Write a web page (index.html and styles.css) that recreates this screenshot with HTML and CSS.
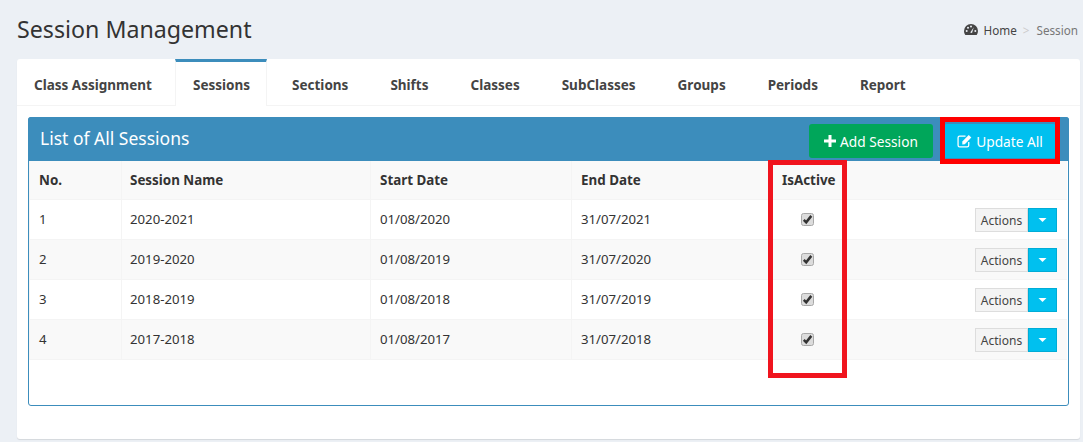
FILE: index.html
```html
<!DOCTYPE html>
<html lang="en">
<head>
  <meta charset="UTF-8" />
  <title>Session Management</title>
  <link rel="stylesheet" href="styles.css">
</head>
<body>
  <svg class="sprite" aria-hidden="true">
    <symbol id="ic-check" viewBox="0 0 13 13">
      <rect x="0.5" y="0.5" width="12" height="12" rx="2" fill="#dcdcdc" stroke="#a8a8a8"/>
      <path d="M2.800 6.800 L5.200 9.300 L10.300 2.900" fill="none" stroke="#333" stroke-width="2.500"/>
    </symbol>
    <symbol id="ic-caret" viewBox="0 0 8 4">
      <path d="M0 0 H8 L4 4 Z" fill="#fff"/>
    </symbol>
  </svg>

  <header class="page-head">
    <h1>Session Management</h1>
    <div class="crumbs">
      <svg class="gauge" viewBox="0 0 14 11"><path d="M7 0a7 7 0 0 0-7 7c0 1.500.5 2.900 1.300 4h11.400A7 7 0 0 0 14 7a7 7 0 0 0-7-7z" fill="#444"/><circle cx="2.700" cy="7" r="1" fill="#ecf0f5"/><circle cx="4" cy="3.800" r="1" fill="#ecf0f5"/><circle cx="7" cy="2.500" r="1" fill="#ecf0f5"/><circle cx="11.300" cy="7" r="1" fill="#ecf0f5"/><path d="M6.200 8.500L9.800 3.300L8 9z" fill="#ecf0f5"/></svg>
      <span class="crumb-home">Home</span>
      <span class="crumb-sep">&gt;</span>
      <span class="crumb-cur">Session</span>
    </div>
  </header>

  <main class="card">
    <nav class="tabs">
      <a class="tab">Class Assignment</a>
      <a class="tab active">Sessions</a>
      <a class="tab">Sections</a>
      <a class="tab">Shifts</a>
      <a class="tab">Classes</a>
      <a class="tab">SubClasses</a>
      <a class="tab">Groups</a>
      <a class="tab">Periods</a>
      <a class="tab">Report</a>
    </nav>

    <section class="box">
      <div class="box-head">
        <h2>List of All Sessions</h2>
        <div class="box-tools">
          <button class="btn btn-green"><svg class="ic-plus" viewBox="0 0 12 12"><path d="M4.500 0h3v4.500H12v3H7.500V12h-3V7.500H0v-3h4.500z" fill="#fff"/></svg>Add Session</button>
          <button class="btn btn-blue"><svg class="ic-edit" viewBox="0 0 15 13"><path d="M11 7.500V10.500a1.500 1.500 0 0 1-1.500 1.500H2.500A1.500 1.500 0 0 1 1 10.500V3.500A1.500 1.500 0 0 1 2.500 2H8" fill="none" stroke="#fff" stroke-width="1.200"/><path d="M5 7l6-6.200 2.400 2.400L7.300 9.500 5 9.800z" fill="#fff"/></svg>Update All</button>
        </div>
      </div>

      <table class="grid">
        <colgroup>
          <col class="c-no"><col class="c-name"><col class="c-date"><col class="c-date"><col class="c-active"><col>
        </colgroup>
        <thead>
          <tr><th>No.</th><th>Session Name</th><th>Start Date</th><th>End Date</th><th>IsActive</th><th></th></tr>
        </thead>
        <tbody>
          <tr>
            <td>1</td><td>2020-2021</td><td>01/08/2020</td><td>31/07/2021</td>
            <td class="chk"><svg class="ic-check"><use href="#ic-check"/></svg></td>
            <td class="act"><span class="split"><span class="split-label">Actions</span><span class="split-caret"><svg><use href="#ic-caret"/></svg></span></span></td>
          </tr>
          <tr>
            <td>2</td><td>2019-2020</td><td>01/08/2019</td><td>31/07/2020</td>
            <td class="chk"><svg class="ic-check"><use href="#ic-check"/></svg></td>
            <td class="act"><span class="split"><span class="split-label">Actions</span><span class="split-caret"><svg><use href="#ic-caret"/></svg></span></span></td>
          </tr>
          <tr>
            <td>3</td><td>2018-2019</td><td>01/08/2018</td><td>31/07/2019</td>
            <td class="chk"><svg class="ic-check"><use href="#ic-check"/></svg></td>
            <td class="act"><span class="split"><span class="split-label">Actions</span><span class="split-caret"><svg><use href="#ic-caret"/></svg></span></span></td>
          </tr>
          <tr>
            <td>4</td><td>2017-2018</td><td>01/08/2017</td><td>31/07/2018</td>
            <td class="chk"><svg class="ic-check"><use href="#ic-check"/></svg></td>
            <td class="act"><span class="split"><span class="split-label">Actions</span><span class="split-caret"><svg><use href="#ic-caret"/></svg></span></span></td>
          </tr>
        </tbody>
      </table>
    </section>
  </main>

  <!-- Red annotation frames drawn over the screenshot -->
  <div class="mark mark-update"></div>
  <div class="mark mark-active"></div>
</body>
</html>
```

FILE: styles.css
```css
:root {
  --blu: #3c8dbc;
  --ciano: #00c0ef;
  --verde: #00a65a;
  --testo: #333;
}

* {
  margin: 0;
  padding: 0;
  box-sizing: border-box;
}

html, body {
  height: 442px;
  overflow: hidden;
}

body {
  background: #ecf0f5;
  color: var(--testo);
  font-family: "Noto Sans", sans-serif;
  font-size: 13px;
  padding: 0 3px 0 17px;
  position: relative;
}

.sprite {
  display: none;
}

.page-head {
  height: 59px;
  padding-bottom: 2px;
  display: flex;
  justify-content: space-between;
  align-items: center;
}

.page-head h1 {
  font-size: 23.2px;
  font-weight: 400;
}

.crumbs {
  display: flex;
  align-items: center;
  font-size: 11.7px;
  color: #444;
  margin-right: 2px;
  margin-top: 2px;
}

.gauge {
  width: 14px;
  height: 11px;
  margin-right: 6px;
}

.crumb-sep {
  color: #ccc;
  margin: 0 7px 0 6px;
}

.crumb-cur {
  color: #777;
}

.card {
  background: #fff;
  height: 380px;
  border-radius: 3px;
  box-shadow: 0 1px 1px rgba(0, 0, 0, 0.1);
  padding: 0 11px;
}

.tabs {
  display: flex;
  height: 47px;
  margin: 0 -11px;
  border-bottom: 1px solid #f4f4f4;
}

.tab {
  padding: 1px 16px 0;
  display: flex;
  align-items: center;
  font-weight: 700;
  font-size: 13.5px;
  color: #444;
  border-top: 3px solid transparent;
  border-left: 1px solid transparent;
  border-right: 1px solid transparent;
  margin-right: 8px;
  height: 47px;
}

.tab:first-child {
  margin-right: 7px;
}

.tab.active {
  border-top-color: var(--blu);
  border-left-color: #f4f4f4;
  border-right-color: #f4f4f4;
  background: #fff;
  margin-left: -1px;
  padding-left: 17px;
}

.box {
  margin-top: 11px;
  height: 289px;
  border: 1px solid var(--blu);
  border-radius: 3px;
}

.box-head {
  background: var(--blu);
  height: 44px;
  margin: -1px -1px 0;
  border-radius: 3px 3px 0 0;
  padding: 7px 13px 0 12px;
  display: flex;
  justify-content: space-between;
  color: #fff;
}

.box-head h2 {
  font-size: 17.5px;
  font-weight: 400;
  line-height: 28px;
}

.box-tools {
  display: flex;
  gap: 11px;
}

.btn {
  height: 34px;
  border: none;
  border-radius: 3px;
  color: #fff;
  font: 400 13.7px "Noto Sans", sans-serif;
  display: flex;
  align-items: center;
  justify-content: center;
}

.btn-green {
  background: var(--verde);
  width: 124px;
}

.btn-blue {
  background: var(--ciano);
  width: 112px;
}

.ic-plus {
  width: 12px;
  height: 12px;
  margin-right: 4px;
}

.ic-edit {
  width: 16px;
  height: 14px;
  margin-right: 3px;
}

.grid {
  width: 1038px;
  border-collapse: collapse;
  table-layout: fixed;
}

.c-no { width: 92px; }
.c-name { width: 249px; }
.c-date { width: 201px; }
.c-active { width: 70px; }

.grid th, .grid td {
  text-align: left;
  padding: 0 9px;
  border: 1px solid #f4f4f4;
  border-top: none;
  font-size: 13.2px;
  height: 40px;
}

.grid th {
  background: #f9f9f9;
  font-size: 13.4px;
  font-weight: 700;
  height: 38px;
}

.grid th:nth-child(2), .grid td:nth-child(2) {
  padding-left: 8px;
}

.grid tbody tr:nth-child(even) {
  background: #f9f9f9;
}

.grid th:nth-child(5),
.grid th:nth-child(6),
.grid td:nth-child(5),
.grid td:nth-child(6) {
  border-left: none;
  border-right: none;
}

.grid td.chk {
  padding-left: 28px;
}

.ic-check {
  display: block;
  width: 13px;
  height: 13px;
}

.grid td.act {
  text-align: right;
  padding-right: 10px;
  padding-top: 2px;
}

.split {
  display: inline-flex;
  vertical-align: middle;
  height: 24px;
}

.split-label {
  width: 53px;
  display: flex;
  align-items: center;
  justify-content: center;
  font-size: 12px;
  color: #444;
  background: #f4f4f4;
  border: 1px solid #ddd;
}

.split-caret {
  width: 29px;
  background: var(--ciano);
  border: 1px solid #00acd6;
  display: flex;
  align-items: center;
  justify-content: center;
}

.split-caret svg {
  width: 9px;
  height: 4px;
}

.mark {
  position: absolute;
  border: 5px solid #f0141e;
  pointer-events: none;
}

.mark-update {
  left: 940px;
  top: 117px;
  width: 120px;
  height: 47px;
  border-color: #f00;
}

.mark-active {
  left: 768px;
  top: 160px;
  width: 79px;
  height: 218px;
}
```
